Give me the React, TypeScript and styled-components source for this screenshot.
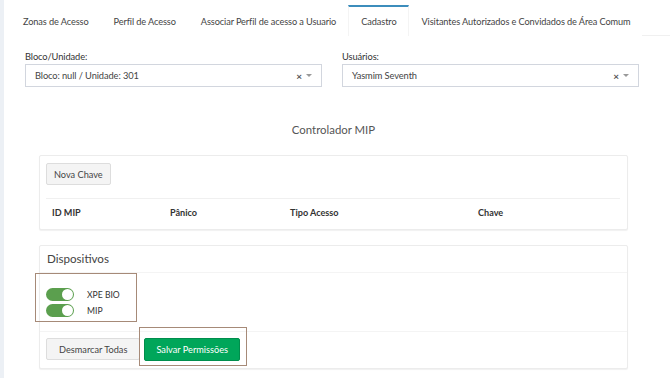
import React from 'react'
import styled, { createGlobalStyle } from 'styled-components'

const GlobalStyle = createGlobalStyle`
    html, body {
        margin: 0;
        padding: 0;
        background: #ffffff;
        font-family: 'Lato', 'Noto Sans', sans-serif;
        color: #333333;
    }
    * {
        box-sizing: border-box;
    }
`

const tabs = [
    'Zonas de Acesso',
    'Perfil de Acesso',
    'Associar Perfil de acesso a Usuario',
    'Cadastro',
    'Visitantes Autorizados e Convidados de Área Comum'
]

const devices = ['XPE BIO', 'MIP']

export default function App() {
    return (
        <LayoutPage>
            <GlobalStyle />
            <LayoutSideStrip />
            <LayoutContent>
                <NavTabs>
                    {tabs.map((tab) => (
                        <NavTab key={tab} active={tab === 'Cadastro'}>
                            {tab}
                        </NavTab>
                    ))}
                </NavTabs>
                <LayoutFilters>
                    <FormGroup>
                        <FormLabel>Bloco/Unidade:</FormLabel>
                        <SelectBox>
                            <SelectValue>Bloco: null / Unidade: 301</SelectValue>
                            <SelectIcons>
                                <span>×</span>
                                <SelectArrow />
                            </SelectIcons>
                        </SelectBox>
                    </FormGroup>
                    <FormGroup>
                        <FormLabel>Usuários:</FormLabel>
                        <SelectBox>
                            <SelectValue>Yasmim Seventh</SelectValue>
                            <SelectIcons>
                                <span>×</span>
                                <SelectArrow />
                            </SelectIcons>
                        </SelectBox>
                    </FormGroup>
                </LayoutFilters>
                <LayoutSection>
                    <TextSectionTitle>Controlador MIP</TextSectionTitle>
                    <Panel>
                        <PanelBody bottom={5}>
                            <ButtonDefault pad={7}>Nova Chave</ButtonDefault>
                            <TableHead>
                                <span>ID MIP</span>
                                <span>Pânico</span>
                                <span>Tipo Acesso</span>
                                <span>Chave</span>
                            </TableHead>
                        </PanelBody>
                    </Panel>
                    <Panel>
                        <PanelHeader>Dispositivos</PanelHeader>
                        <PanelBody bottom={9}>
                            <Highlight>
                                {devices.map((device) => (
                                    <ToggleRow key={device}>
                                        <Toggle />
                                        <ToggleLabel>{device}</ToggleLabel>
                                    </ToggleRow>
                                ))}
                            </Highlight>
                        </PanelBody>
                        <PanelFooter>
                            <ButtonDefault pad={12}>Desmarcar Todas</ButtonDefault>
                            <HighlightButton>
                                <ButtonSuccess>Salvar Permissões</ButtonSuccess>
                            </HighlightButton>
                        </PanelFooter>
                    </Panel>
                </LayoutSection>
            </LayoutContent>
        </LayoutPage>
    )
}

const LayoutPage = styled.div`
    display: flex;
    width: 670px;
    height: 378px;
    overflow: hidden;
`
const LayoutSideStrip = styled.div`
    width: 4px;
    flex-shrink: 0;
    background: #ecf0f5;
`
const LayoutContent = styled.div`
    flex: 1;
    display: flex;
    flex-direction: column;
    padding-top: 5px;
`
const NavTabs = styled.div`
    display: flex;
    margin-left: 6px;
    border-bottom: 1px solid #f0f0f0;
    height: 31px;
`
const NavTab = styled.div<{ active?: boolean }>`
    display: flex;
    align-items: center;
    padding: 0 11px 0 12px;
    font-size: 9.2px;
    letter-spacing: -0.1px;
    color: #444444;
    white-space: nowrap;
    border-top: 2px solid ${(p) => (p.active ? '#3c8dbc' : 'transparent')};
    border-left: 1px solid ${(p) => (p.active ? '#f4f4f4' : 'transparent')};
    border-right: 1px solid ${(p) => (p.active ? '#f4f4f4' : 'transparent')};
    background: #ffffff;
    margin-bottom: -1px;
`
const LayoutFilters = styled.div`
    display: grid;
    grid-template-columns: 297px 297px;
    column-gap: 20px;
    padding: 13px 0 0 21px;
`
const FormGroup = styled.div`
    display: flex;
    flex-direction: column;
`
const FormLabel = styled.label`
    font-size: 9.3px;
    letter-spacing: -0.1px;
    color: #333333;
    line-height: 15px;
`
const SelectBox = styled.div`
    height: 23px;
    border: 1px solid #d2d6de;
    display: flex;
    align-items: center;
    justify-content: space-between;
    padding: 0 9px 0 9px;
`
const SelectValue = styled.span`
    font-size: 9.3px;
    letter-spacing: -0.1px;
    color: #444444;
`
const SelectIcons = styled.span`
    display: flex;
    align-items: center;
    gap: 4px;
    font-size: 10px;
    font-weight: 700;
    color: #555555;
`
const SelectArrow = styled.span`
    width: 0;
    height: 0;
    border-left: 3px solid transparent;
    border-right: 3px solid transparent;
    border-top: 3px solid #999999;
`
const LayoutSection = styled.div`
    display: flex;
    flex-direction: column;
    gap: 15px;
    width: 589px;
    margin-left: 35px;
`
const TextSectionTitle = styled.h3`
    margin: 33px 0 0;
    text-align: center;
    font-size: 11.4px;
    font-weight: 400;
    color: #555555;
    line-height: 20px;
`
const Panel = styled.div`
    border: 1px solid #ececec;
    border-radius: 2px;
    box-shadow: 0 1px 1px rgba(0, 0, 0, 0.06);
    background: #ffffff;
`
const PanelHeader = styled.div`
    padding: 4px 7px 4px;
    font-size: 11.6px;
    color: #444444;
    border-bottom: 1px solid #f4f4f4;
    line-height: 18px;
`
const PanelBody = styled.div<{ bottom: number }>`
    display: flex;
    flex-direction: column;
    align-items: flex-start;
    padding: 7px 7px ${(p) => p.bottom}px 6px;
`
const PanelFooter = styled.div`
    display: flex;
    align-items: center;
    padding: 5px 6px 7px 6px;
    border-top: 1px solid #f4f4f4;
`
const ButtonDefault = styled.button<{ pad: number }>`
    height: 22px;
    padding: 0 ${(p) => p.pad}px;
    font-family: inherit;
    font-size: 9.2px;
    color: #444444;
    background: #f4f4f4;
    border: 1px solid #dddddd;
    border-radius: 2px;
`
const ButtonSuccess = styled.button`
    height: 23px;
    padding: 0 11px;
    font-family: inherit;
    font-size: 9.2px;
    color: #ffffff;
    background: #00a65a;
    border: 1px solid #008d4c;
    border-radius: 2px;
`
const TableHead = styled.div`
    display: grid;
    align-self: stretch;
    grid-template-columns: 118px 120px 188px 1fr;
    margin-top: 13px;
    padding: 7px 6px 4px;
    border-top: 1px solid #f0f0f0;
    font-size: 9.1px;
    font-weight: 700;
    color: #333333;
    line-height: 14px;
`
const Highlight = styled.div`
    display: flex;
    flex-direction: column;
    gap: 3px;
    width: 102px;
    margin: -7px 0 0 -11px;
    padding: 14px 0 4px 10px;
    border: 1px solid #a68a78;
`
const ToggleRow = styled.div`
    display: flex;
    align-items: center;
    gap: 13px;
`
const Toggle = styled.span`
    position: relative;
    width: 28px;
    height: 13px;
    border-radius: 7px;
    background: #5b9f4e;
    &::after {
        content: '';
        position: absolute;
        right: 1px;
        top: 1px;
        width: 11px;
        height: 11px;
        border-radius: 50%;
        background: #ffffff;
    }
`
const ToggleLabel = styled.span`
    font-size: 8.6px;
    color: #333333;
`
const HighlightButton = styled.div`
    margin: -10px 0 -5px -1px;
    padding: 9px 6px 4px 4px;
    border: 1px solid #a68a78;
`
